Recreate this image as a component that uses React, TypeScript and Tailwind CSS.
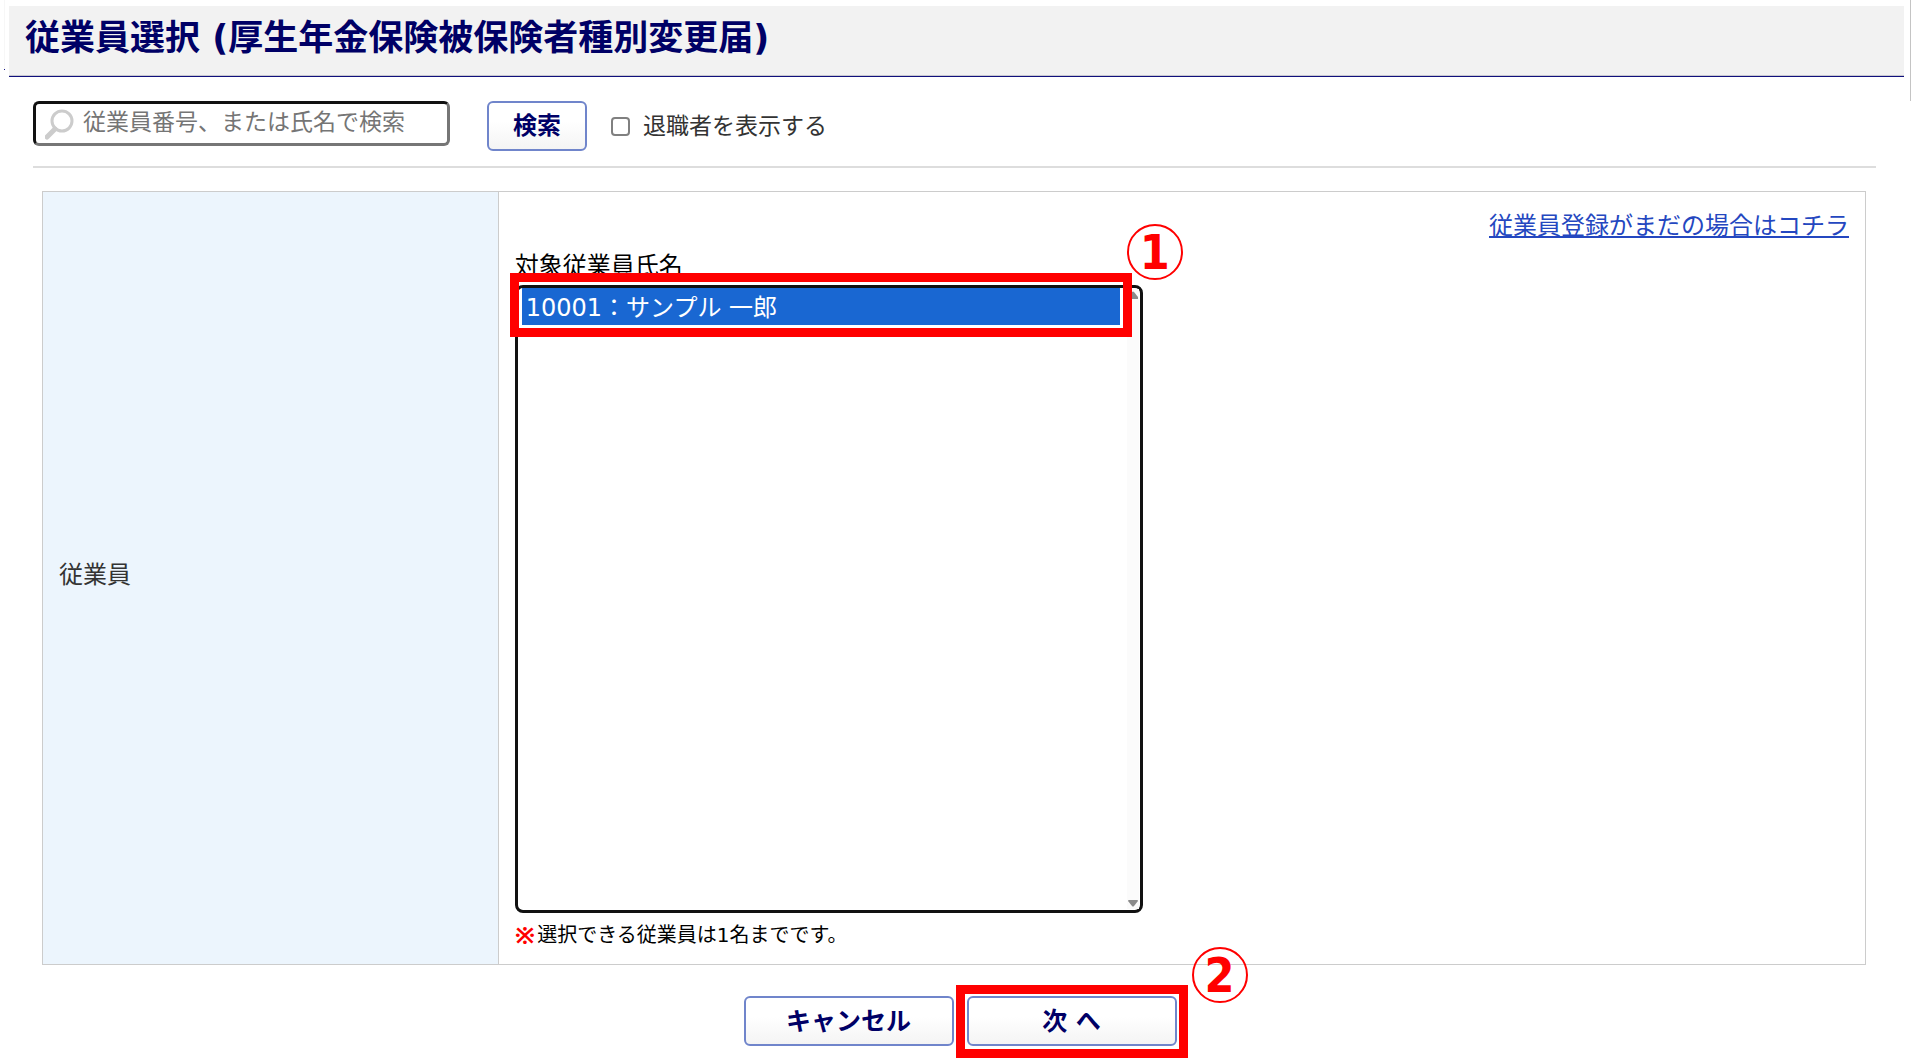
import { useState } from 'react'

const employees = [{ id: '10001', name: 'サンプル 一郎' }]

function StepBadge({ step, className }: { step: number; className: string }) {
  return (
    <span className={`absolute flex size-14 items-center justify-center rounded-full border-2 border-[#ff0000] font-['DejaVu_Sans_Condensed','DejaVu_Sans',sans-serif] text-5xl leading-none font-bold text-[#ff0000] ${className}`}>
      {step}
    </span>
  )
}

function Button({ children, className }: { children: React.ReactNode; className: string }) {
  return (
    <button
      type="button"
      className={`h-[50px] shrink-0 rounded-md border-2 border-[#7085cb] bg-linear-to-b from-white from-40% to-[#f4f4f4] leading-none font-bold text-[#000066] ${className}`}
    >
      {children}
    </button>
  )
}

export default function App() {
  const [keyword, setKeyword] = useState('')
  const [showRetired, setShowRetired] = useState(false)
  const [selected, setSelected] = useState(['10001'])

  return (
    <div className="relative bg-white pt-1.5 pr-[7px] pl-[9px] font-['DejaVu_Sans','Noto_Sans_CJK_JP',sans-serif] text-[#333333]">
      <span className="absolute top-0 right-0 h-[101px] w-px bg-[#c4c4c4]" />
      <span className="absolute top-0 left-1 h-[70px] w-px border-b border-[#1a1a8a] bg-[#f7f7f7]" />

      <header className="border-b border-[#10107c] bg-[#f2f2f2]">
        <h1 className="border-b border-[#c8c8d0] pb-1 pl-4 text-[35px] leading-[65px] font-bold text-[#000066]">
          従業員選択 (厚生年金保険被保険者種別変更届)
        </h1>
      </header>

      <form className="mr-7 ml-6 flex items-start border-b-2 border-[#dddddd] pt-6 pb-[15px]" onSubmit={e => e.preventDefault()}>
        <div className="relative">
          <svg className="absolute top-2 left-3 size-8" viewBox="0 0 32 32" fill="none" stroke="#cccccc">
            <circle cx="17" cy="12" r="10" strokeWidth="3" />
            <path d="M10 20 L2 28" strokeWidth="5" strokeLinecap="round" />
          </svg>
          <input
            type="text"
            aria-label="従業員検索"
            value={keyword}
            onChange={e => setKeyword(e.target.value)}
            placeholder="従業員番号、または氏名で検索"
            className="block h-[45px] w-[417px] rounded-md border-3 border-t-[#111111] border-r-[#767676] border-b-[#767676] border-l-[#111111] pb-1 pl-[47px] text-[23px] leading-8 placeholder:text-[#757575]"
          />
        </div>
        <Button className="ml-[37px] w-[100px] text-2xl">検索</Button>
        <label className="ml-6 flex h-[50px] items-center text-[23px]">
          <input
            type="checkbox"
            checked={showRetired}
            onChange={e => setShowRetired(e.target.checked)}
            className="mr-[13px] size-[19px] appearance-none rounded-sm border-2 border-[#808080] bg-white checked:bg-[#1967d2]"
          />
          退職者を表示する
        </label>
      </form>

      <div className="mt-[23px] mr-[38px] ml-[33px]">
        <table className="w-full border-collapse border border-[#cccccc]">
          <tbody>
            <tr>
              <th scope="row" className="w-1/4 border border-[#cccccc] bg-[#ecf5fd] px-4 pb-1.5 text-left text-2xl font-normal">
                従業員
              </th>
              <td className="border border-[#cccccc] px-4 pt-4 pb-[7px] align-top">
                <p className="text-right text-2xl leading-9">
                  <a href="#" className="text-[#2447c0] underline">従業員登録がまだの場合はコチラ</a>
                </p>
                <label htmlFor="employee" className="block pt-1 text-2xl leading-[37px] text-black">対象従業員氏名</label>
                <div className="relative w-[628px]">
                  <select
                    id="employee"
                    multiple
                    value={selected}
                    onChange={e => setSelected(Array.from(e.target.selectedOptions, o => o.value))}
                    className="block h-[628px] w-full overflow-hidden rounded-lg border-3 border-[#111111] bg-white pr-5 pl-1 text-2xl"
                  >
                    {employees.map(e => (
                      <option
                        key={e.id}
                        value={e.id}
                        className="h-[37px] px-1 py-0 leading-7 checked:bg-[linear-gradient(#1967d2,#1967d2)] checked:text-white"
                      >
                        {e.id}：{e.name}
                      </option>
                    ))}
                  </select>
                  <div className="pointer-events-none absolute top-1 right-1 bottom-1 flex w-3 flex-col justify-between bg-[#fbfbfb]">
                    <svg className="h-3 w-3" viewBox="0 0 12 12" fill="#8b8b8b"><path d="M5 3 Q6 2 7 3 L11 8 V10 H1 V8 Z" /></svg>
                    <svg className="h-3 w-3" viewBox="0 0 12 12" fill="#8b8b8b"><path d="M7 9 Q6 10 5 9 L1 4 Q1 3 2 3 H10 Q11 3 11 4 Z" /></svg>
                  </div>
                  <span className="pointer-events-none absolute -top-3 -left-[5px] h-16 w-[622px] border-9 border-[#ff0000]" />
                  <StepBadge step={1} className="-top-[61px] -right-10" />
                </div>
                <p className="flex items-center gap-0.5 text-xl leading-[44px] text-black">
                  <span className="font-['Noto_Sans',sans-serif] text-2xl leading-[44px] font-bold text-[#ff0000]">※</span>
                  選択できる従業員は1名までです。
                </p>
              </td>
            </tr>
          </tbody>
        </table>
      </div>

      <div className="mt-5 flex items-start justify-center gap-0.5 pl-[18px]">
        <Button className="mt-[11px] w-[210px] text-[25px]">キャンセル</Button>
        <div className="relative border-9 border-[#ff0000] px-0.5 pt-0.5 pb-[3px]">
          <Button className="block w-[210px] text-[25px]">次 へ</Button>
          <StepBadge step={2} className="-top-[47px] -right-[69px]" />
        </div>
      </div>
    </div>
  )
}
